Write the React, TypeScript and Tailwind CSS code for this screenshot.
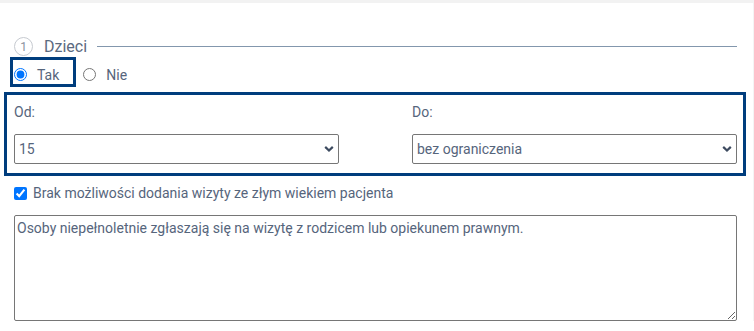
import { useState } from "react";

function Chevron() {
  return (
    <svg
      width="10"
      height="7"
      viewBox="0 0 10 7"
      className="pointer-events-none absolute right-[5px] top-1/2 -translate-y-1/2"
    >
      <path d="M1.2 1.4 L5 5 L8.8 1.4" fill="none" stroke="#3d4b60" strokeWidth="2.2" />
    </svg>
  );
}

function AgeSelect({ value, options }: { value: string; options: string[] }) {
  const [v, setV] = useState(value);
  return (
    <div className="relative">
      <select
        value={v}
        onChange={(e) => setV(e.target.value)}
        className="h-[30px] w-full appearance-none rounded-[2px] border border-[#767676] bg-white pl-[4px] pr-6 text-[14px] text-[#56657c] outline-none"
      >
        {options.map((o) => (
          <option key={o} value={o}>
            {o}
          </option>
        ))}
      </select>
      <Chevron />
    </div>
  );
}

export default function App() {
  const [kids, setKids] = useState("tak");
  const [block, setBlock] = useState(true);
  const ages = Array.from({ length: 19 }, (_, i) => String(i));

  return (
    <div className="min-h-screen bg-white font-['Roboto',sans-serif] text-[14px] text-[#56657c]">
      <div className="h-[3px] bg-[#f2f2f2]" />
      <div className="flex">
        <div className="flex-1 pl-[14px] pr-[16px] pt-[34px]">
          <div className="flex h-[19px] items-center">
            <span className="flex h-[19px] w-[19px] items-center justify-center rounded-full border border-[#c6cad0] text-[12px] leading-none text-[#8b929c]">
              1
            </span>
            <span className="ml-[11px] text-[16px] leading-none text-[#5b6a80]">Dzieci</span>
            <div className="ml-[10px] h-px flex-1 bg-[#8397ad]" />
          </div>

          <div className="mt-px flex items-center">
            <label className="-ml-[4px] flex h-[30px] items-center border-[3px] border-[#003d7d] pl-px pr-[14px] pt-[5px]">
              <input
                type="radio"
                name="kids"
                checked={kids === "tak"}
                onChange={() => setKids("tak")}
                className="m-0 h-[13px] w-[13px] accent-[#0075ff]"
              />
              <span className="ml-[10px] leading-[20px]">Tak</span>
            </label>
            <label className="ml-[7px] flex items-center pt-[5px]">
              <input
                type="radio"
                name="kids"
                checked={kids === "nie"}
                onChange={() => setKids("nie")}
                className="m-0 h-[13px] w-[13px] accent-[#0075ff]"
              />
              <span className="ml-[10px] leading-[20px]">Nie</span>
            </label>
          </div>

          <div className="-ml-[10px] -mr-[9px] mt-[5px] border-[3px] border-[#003d7d] pb-[9px] pl-[7px] pr-[6px] pt-[7px]">
            <div className="grid grid-cols-2 gap-x-[73px]">
              <div>
                <div className="leading-[20px]">Od:</div>
                <div className="mt-[12px]">
                  <AgeSelect value="15" options={ages} />
                </div>
              </div>
              <div>
                <div className="leading-[20px]">Do:</div>
                <div className="mt-[12px]">
                  <AgeSelect value="bez ograniczenia" options={["bez ograniczenia", ...ages]} />
                </div>
              </div>
            </div>
          </div>

          <label className="mt-[7px] flex items-center">
            <input
              type="checkbox"
              checked={block}
              onChange={(e) => setBlock(e.target.checked)}
              className="m-0 h-[13px] w-[13px] accent-[#0075ff]"
            />
            <span className="ml-[6px] leading-[20px]">
              Brak możliwości dodania wizyty ze złym wiekiem pacjenta
            </span>
          </label>

          <textarea
            defaultValue="Osoby niepełnoletnie zgłaszają się na wizytę z rodzicem lub opiekunem prawnym."
            className="mt-[12px] block h-[106px] w-full rounded-[2px] border border-[#767676] px-[2px] py-[2px] text-[14px] leading-[20px] text-[#56657c] outline-none"
          />
        </div>
        <div className="w-px bg-[#f4f4f4]" />
      </div>
    </div>
  );
}
